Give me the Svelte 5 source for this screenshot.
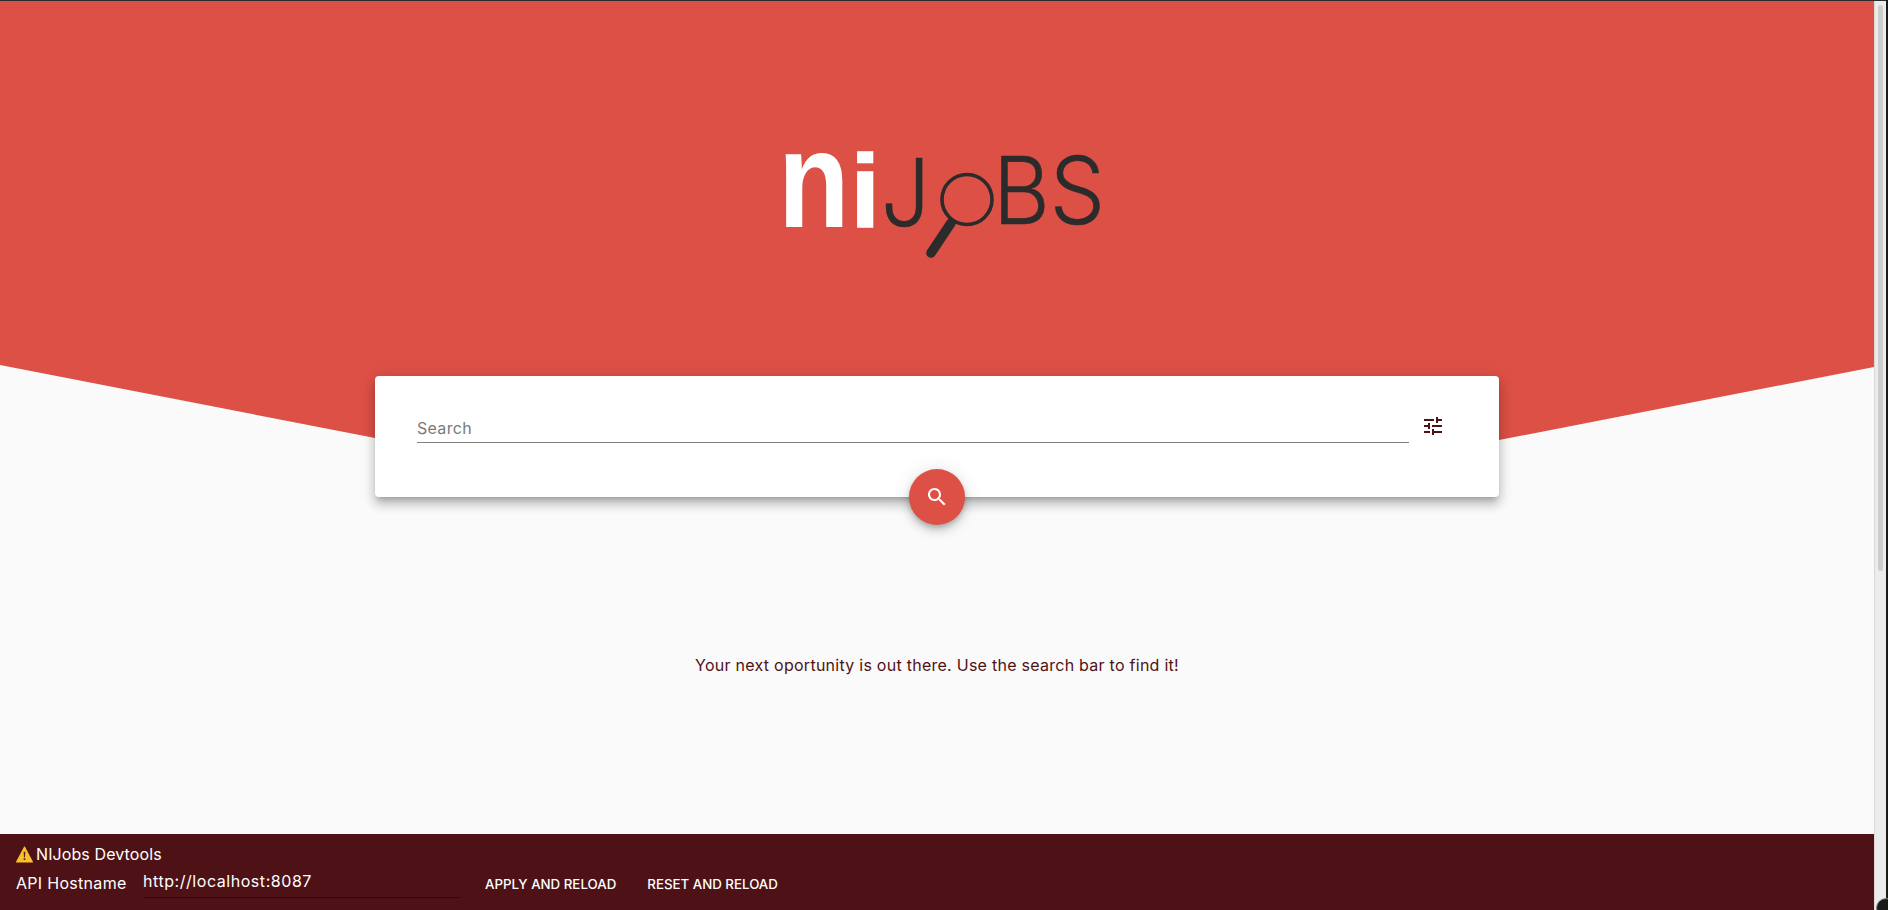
<script>
  const tune = "M3 17v2h6v-2H3zM3 5v2h10V5H3zm10 16v-2h8v-2h-8v-2h-2v6h2zM7 9v2H3v2h4v2h2V9H7zm14 4v-2H11v2h10zm-6-4h2V7h4V5h-4V3h-2v6z";
  const search = "M15.5 14h-.79l-.28-.27C15.41 12.59 16 11.11 16 9.5 16 5.91 13.09 3 9.5 3S3 5.91 3 9.5 5.91 16 9.5 16c1.61 0 3.09-.59 4.23-1.57l.27.28v.79l5 4.99L20.49 19l-4.99-5zm-6 0C7.01 14 5 11.99 5 9.5S7.01 5 9.5 5 14 7.01 14 9.5 11.99 14 9.5 14z";
</script>

<div class="window">
  <div class="page">
    <main class="main">
      <header class="hero">
        <svg class="logo" width="340" height="130" viewBox="770 145 340 130" role="img" aria-label="NIJobs">
          <text class="ni" x="778" y="227" textLength="71.5" lengthAdjust="spacingAndGlyphs">n</text>
          <text class="i" x="850.5" y="227" textLength="29.5" lengthAdjust="spacingAndGlyphs">i</text>
          <text class="thin" x="881" y="226" textLength="49" lengthAdjust="spacingAndGlyphs">J</text>
          <text class="thin" x="993" y="224" textLength="112" lengthAdjust="spacingAndGlyphs">BS</text>
          <circle cx="967" cy="199.5" r="25" fill="none" stroke="#2b2b2b" stroke-width="3.6" />
          <line x1="951" y1="223" x2="931" y2="253" stroke="#2b2b2b" stroke-width="9.5" stroke-linecap="round" />
        </svg>
      </header>

      <section class="card">
        <div class="field">
          <span class="placeholder">Search</span>
        </div>
        <svg class="tune" width="24" height="24" viewBox="0 0 24 24"><path d={tune} /></svg>
        <button class="fab" aria-label="Search">
          <svg width="24" height="24" viewBox="0 0 24 24"><path d={search} /></svg>
        </button>
      </section>

      <p class="message">Your next oportunity is out there. Use the search bar to find it!</p>

      <footer class="devtools">
        <div class="title">
          <svg width="17" height="17" viewBox="0 0 16 16">
            <path d="M8 1 15.5 15H.5z" fill="#fbc02d" stroke="#fbc02d" stroke-width="1" stroke-linejoin="round" />
            <path d="M7.2 5.5h1.6l-.3 5.2h-1zM7.2 11.6h1.6v1.6H7.2z" fill="#4a2a10" />
          </svg>
          <span>NIJobs Devtools</span>
        </div>
        <div class="controls">
          <span class="label">API Hostname</span>
          <div class="host"><span>http://localhost:8087</span></div>
          <button class="action first">Apply and reload</button>
          <button class="action">Reset and reload</button>
        </div>
      </footer>
    </main>
    <div class="scrollbar"><div class="thumb"></div></div>
  </div>
  <div class="edge"></div>
  <div class="corner"></div>
</div>

<style>
  :global(body) {
    margin: 0;
    overflow: hidden;
  }
  .window {
    position: relative;
    display: flex;
    width: 1888px;
    height: 910px;
    overflow: hidden;
    font-family: Inter, "Open Sans", sans-serif;
    background: #fafafa;
    color: #4e1216;
  }
  .page {
    display: flex;
    flex: 1;
    min-width: 0;
    border-top: 1px solid #2b2b2b;
  }
  .main {
    flex: 1;
    min-width: 0;
    display: flex;
    flex-direction: column;
    height: 909px;
  }
  .hero {
    height: 459px;
    flex: none;
    background: #dd5046;
    clip-path: polygon(0 0, 100% 0, 100% 366px, 1499px 439px, 1499px 459px, 375px 459px, 375px 437px, 0 364px);
    padding: 144px 0 0 770px;
    box-sizing: border-box;
  }
  .logo {
    display: block;
    overflow: visible;
  }
  .ni,
  .i {
    font-family: "Liberation Sans", sans-serif;
    font-weight: 700;
    fill: #fff;
  }
  .ni {
    font-size: 137px;
  }
  .i {
    font-size: 103px;
    stroke: #fff;
    stroke-width: 1.5px;
  }
  .thin {
    font-family: Inter, sans-serif;
    font-weight: 300;
    font-size: 93px;
    fill: #2b2b2b;
    stroke: #2b2b2b;
    stroke-width: .5px;
  }
  .card {
    position: relative;
    flex: none;
    width: 1124px;
    height: 121px;
    margin: -84px 0 0 375px;
    box-sizing: border-box;
    padding: 0 54px 0 42px;
    background: #fff;
    border-radius: 4px;
    box-shadow: 0 5px 5px -3px rgba(0,0,0,.2), 0 8px 10px 1px rgba(0,0,0,.14), 0 3px 14px 2px rgba(0,0,0,.12);
    display: flex;
    align-items: flex-start;
    gap: 12px;
  }
  .field {
    flex: 1;
    height: 67px;
    box-sizing: border-box;
    border-bottom: 1px solid #808080;
    display: flex;
    align-items: flex-end;
    padding-bottom: 4px;
  }
  .placeholder {
    font-size: 16px;
    letter-spacing: .3px;
    color: #7a7a7a;
    line-height: 20px;
  }
  .tune {
    flex: none;
    margin-top: 38px;
    fill: #4e1216;
  }
  .fab {
    position: absolute;
    left: 534px;
    top: 93px;
    width: 56px;
    height: 56px;
    border: 0;
    padding: 0;
    border-radius: 50%;
    background: #dd5046;
    display: flex;
    align-items: center;
    justify-content: center;
    box-shadow: 0 3px 5px -1px rgba(0,0,0,.2), 0 6px 10px 0 rgba(0,0,0,.14), 0 1px 18px 0 rgba(0,0,0,.12);
  }
  .fab svg {
    fill: #fff;
  }
  .message {
    margin: 0;
    padding-top: 156px;
    flex: 1;
    text-align: center;
    font-size: 16px;
    letter-spacing: .26px;
    line-height: 24px;
  }
  .devtools {
    flex: none;
    height: 76px;
    box-sizing: border-box;
    background: #4e1216;
    color: #fff;
    padding: 9px 0 0 16px;
    font-size: 16px;
  }
  .title {
    display: flex;
    align-items: center;
    gap: 3px;
    height: 22px;
    line-height: 22px;
    letter-spacing: .1px;
  }
  .controls {
    display: flex;
    align-items: flex-start;
    margin-top: 6px;
  }
  .label {
    width: 127px;
    flex: none;
    line-height: 24px;
    letter-spacing: .3px;
  }
  .host {
    width: 317px;
    flex: none;
    height: 27px;
    box-sizing: border-box;
    line-height: 20px;
    letter-spacing: .55px;
    border-bottom: 1px solid #2f0a0d;
  }
  .action {
    background: none;
    border: 0;
    color: #fff;
    font: 500 13.3px/24px Inter, sans-serif;
    text-transform: uppercase;
    padding: 1px 0 0;
    margin-left: 31px;
    white-space: nowrap;
  }
  .action.first {
    margin-left: 25px;
  }
  .scrollbar {
    flex: none;
    width: 12px;
    height: 909px;
    background: #ececec;
    border-left: 1px solid #dcd6d4;
    box-sizing: border-box;
    padding: 4px 3px 0 3px;
  }
  .thumb {
    height: 566px;
    background: #cdcdcd;
    border-radius: 4px;
  }
  .edge {
    flex: none;
    width: 2px;
    background: #1a1a1a;
  }
  .corner {
    position: absolute;
    right: -8px;
    bottom: -8px;
    width: 18px;
    height: 18px;
    border-radius: 50%;
    background: #1a1a1a;
    border: 1px solid #888;
  }
</style>
